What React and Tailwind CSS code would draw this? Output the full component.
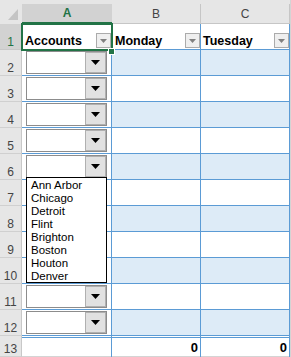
import React from "react";

const accounts = ["Ann Arbor", "Chicago", "Detroit", "Flint", "Brighton", "Boston", "Houton", "Denver"];

function Arrow() {
  return (
    <svg width="9" height="5" viewBox="0 0 9 5">
      <path d="M0 0H9L4.5 5Z" fill="#000" />
    </svg>
  );
}

function FilterButton() {
  return (
    <div className="mb-px flex h-[15px] w-[15px] shrink-0 items-center justify-center border border-[#ababab] bg-[#efefef]">
      <svg width="7" height="4" viewBox="0 0 7 4">
        <path d="M0 0H7L3.5 4Z" fill="#808080" />
      </svg>
    </div>
  );
}

function Combo({ open }) {
  return (
    <div className="relative ml-[4px] mt-px flex h-[23px] w-[81px] border border-[#8c8c8c] bg-white">
      <div className="flex-1" />
      <div className="flex w-[21px] items-center justify-center border border-[#b0b0b0] bg-[#e1e1e1]">
        <Arrow />
      </div>
      {open && (
        <div className="absolute left-[-1px] top-full z-20 h-[106px] w-[81px] border border-black bg-white pl-[4px] pt-px text-[11.5px] leading-[13px] text-black">
          {accounts.map((a) => (
            <div key={a}>{a}</div>
          ))}
        </div>
      )}
    </div>
  );
}

function RowHead({ n, selected }) {
  return (
    <div
      className={
        selected
          ? "flex w-[22px] shrink-0 items-end justify-center border-b border-r border-b-[#c8c8c8] border-r-[#c8c8c8] bg-[#d2d2d2] text-[12px] leading-[14px] text-[#217346]"
          : "flex w-[22px] shrink-0 items-end justify-center border-b border-r border-b-[#d0d0d0] border-r-[#c8c8c8] bg-[#e6e6e6] text-[12px] leading-[14px] text-[#444]"
      }
    >
      {n}
    </div>
  );
}

export default function App() {
  const rows = [2, 3, 4, 5, 6, 7, 8, 9, 10, 11, 12];

  return (
    <div className="h-[357px] w-[291px] overflow-hidden bg-white font-['Liberation_Sans',Arial,sans-serif]">
      {/* column letters */}
      <div className="flex h-[24px] bg-[#e6e6e6]">
        <div className="flex w-[22px] shrink-0 items-end justify-end pb-[4px] pr-[4px]">
          <svg width="10" height="11" viewBox="0 0 10 11">
            <path d="M10 0V11H0Z" fill="#c4c4c4" />
          </svg>
        </div>
        <div className="mt-[4px] flex w-[90px] items-center justify-center border-b-2 border-[#217346] bg-[#d2d2d2] text-[12px] font-bold text-[#217346]">
          A
        </div>
        <div className="mt-[4px] flex w-[89px] items-center justify-center border-b border-r border-[#c6c6c6] text-[12px] text-[#444]">
          B
        </div>
        <div className="mt-[4px] flex w-[89px] items-center justify-center border-b border-r border-[#c6c6c6] text-[12px] text-[#444]">
          C
        </div>
        <div className="flex-1 bg-[#d4d4d4]" />
      </div>

      {/* header row */}
      <div className="flex h-[26px]">
        <RowHead n={1} selected />
        <div className="relative flex w-[90px] items-end justify-between border-b border-r border-[#5b9bd5] pl-[3px] text-[12.5px] font-bold leading-[15px] text-black">
          <span>Accounts</span>
          <FilterButton />
          <div className="absolute left-[-1px] top-[-1px] right-[-2px] bottom-[-2px] z-10 border-2 border-[#217346]" />
          <div className="absolute left-[86px] top-[24px] z-10 h-[7px] w-[7px] border border-white bg-[#217346]" />
        </div>
        <div className="flex w-[89px] items-end justify-between border-b border-r border-[#5b9bd5] pl-[3px] text-[12.5px] font-bold leading-[15px] text-black">
          <span>Monday</span>
          <FilterButton />
        </div>
        <div className="flex w-[89px] items-end justify-between border-b border-r border-[#5b9bd5] pl-[2px] text-[12.5px] font-bold leading-[15px] text-black">
          <span>Tuesday</span>
          <FilterButton />
        </div>
        <div className="flex-1 bg-[#d4d4d4]" />
      </div>

      {/* data rows */}
      {rows.map((n) => {
        const band = n % 2 === 0;
        return (
          <div key={n} className="flex h-[26px]">
            <RowHead n={n} />
            <div className="w-[90px] border-b border-r border-[#5b9bd5] bg-white">
              <Combo open={n === 6} />
            </div>
            <div className={band ? "w-[89px] border-b border-r border-[#5b9bd5] bg-[#ddebf7]" : "w-[89px] border-b border-r border-[#5b9bd5] bg-white"} />
            <div className={band ? "w-[89px] border-b border-r border-[#5b9bd5] bg-[#ddebf7]" : "w-[89px] border-b border-r border-[#5b9bd5] bg-white"} />
            <div className="flex-1 bg-[#d4d4d4]" />
          </div>
        );
      })}

      {/* total row */}
      <div className="flex h-[21px]">
        <RowHead n={13} />
        <div className="flex w-[90px] flex-col border-r border-[#5b9bd5]">
          <div className="h-px bg-white" />
          <div className="flex-1 border-b border-t border-b-[#d4d4d4] border-t-[#5b9bd5]" />
        </div>
        <div className="flex w-[89px] flex-col border-r border-[#5b9bd5]">
          <div className="h-px bg-white" />
          <div className="flex flex-1 items-end justify-end border-b border-t border-b-[#d4d4d4] border-t-[#5b9bd5] pb-px pr-[2px] text-[13px] font-bold leading-[15px] text-black">
            0
          </div>
        </div>
        <div className="flex w-[89px] flex-col border-r border-[#5b9bd5]">
          <div className="h-px bg-white" />
          <div className="flex flex-1 items-end justify-end border-b border-t border-b-[#d4d4d4] border-t-[#5b9bd5] pb-px pr-[2px] text-[13px] font-bold leading-[15px] text-black">
            0
          </div>
        </div>
        <div className="flex-1 bg-[#d4d4d4]" />
      </div>
    </div>
  );
}
